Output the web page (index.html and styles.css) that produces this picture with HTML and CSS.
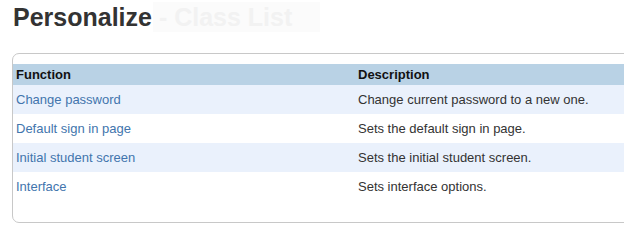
FILE: index.html
```html
<!DOCTYPE html>
<html lang="en">
<head>
    <meta charset="UTF-8">
    <meta name="viewport" content="width=device-width, initial-scale=1.0">
    <title>Personalize</title>
    <link rel="stylesheet" href="styles.css">
</head>
<body>

<h1 class="page-title">Personalize <span class="page-sub">- Class List</span></h1>

<div class="panel">
    <table class="func-table">
        <thead>
            <tr>
                <th class="col-func">Function</th>
                <th>Description</th>
            </tr>
        </thead>
        <tbody>
            <tr class="alt">
                <td><a href="#">Change password</a></td>
                <td>Change current password to a new one.</td>
            </tr>
            <tr>
                <td><a href="#">Default sign in page</a></td>
                <td>Sets the default sign in page.</td>
            </tr>
            <tr class="alt">
                <td><a href="#">Initial student screen</a></td>
                <td>Sets the initial student screen.</td>
            </tr>
            <tr>
                <td><a href="#">Interface</a></td>
                <td>Sets interface options.</td>
            </tr>
        </tbody>
    </table>
</div>

</body>
</html>
```

FILE: styles.css
```css
body {
    font-family: Arial, "Liberation Sans", sans-serif;
    background-color: #fff;
    margin: 0;
    padding: 0;
    overflow: hidden;
}
.page-title {
    font-size: 25px;
    line-height: 30px;
    font-weight: bold;
    color: #333;
    margin: 0;
    padding: 2px 0 0 13px;
}
.page-sub {
    display: inline-block;
    background-color: #fbfbfb;
    color: #f2f2f2;
    padding: 0 6px;
    margin-left: -6px;
    width: 155px;
}
.panel {
    margin: 21px 0 0 12px;
    width: 800px;
    border: 1px solid #c8c8c8;
    border-radius: 7px;
    padding: 10px 0 21px 0;
}
.func-table {
    width: 700px;
    border-collapse: collapse;
    font-size: 13px;
}
.func-table th {
    background-color: #b9d2e5;
    color: #111;
    text-align: left;
    line-height: 15px;
    padding: 3px 3px;
}
.func-table .col-func {
    width: 336px;
}
.func-table td {
    color: #333;
    line-height: 15px;
    padding: 7px 3px;
}
.func-table tr.alt td {
    background-color: #eaf1fc;
}
.func-table a {
    color: #4275ad;
    text-decoration: none;
}
```
